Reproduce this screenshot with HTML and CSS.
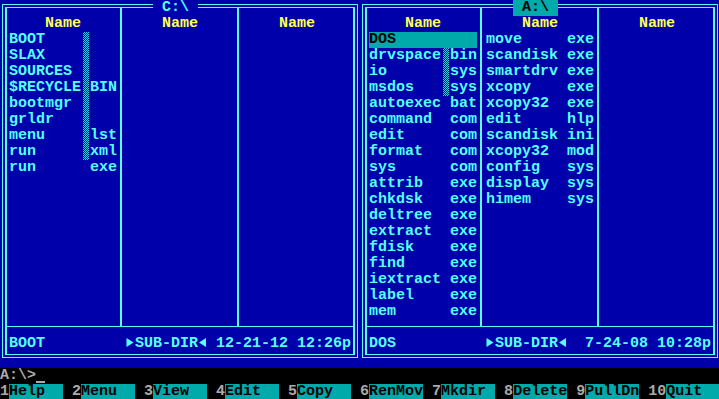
FILE: index.html
```html
<!DOCTYPE html>
<html>
    <head>
        <link rel="stylesheet" href="styles.css">
    </head>
    <body>
        <div class="screen">
            <div class="panels">
                <section class="panel">
                    <div class="title">C:\</div>
                    <div class="frame">
                        <div class="inner">
                            <div class="cols">
                                <div class="col">
                                    <div class="head">Name</div>
                                    <div class="f sh"><span class="n">BOOT</span><i></i><span class="e"></span></div>
                                    <div class="f sh"><span class="n">SLAX</span><i></i><span class="e"></span></div>
                                    <div class="f sh"><span class="n">SOURCES</span><i></i><span class="e"></span></div>
                                    <div class="f sh"><span class="n">$RECYCLE</span><i></i><span class="e">BIN</span></div>
                                    <div class="f sh"><span class="n">bootmgr</span><i></i><span class="e"></span></div>
                                    <div class="f sh"><span class="n">grldr</span><i></i><span class="e"></span></div>
                                    <div class="f sh"><span class="n">menu</span><i></i><span class="e">lst</span></div>
                                    <div class="f sh"><span class="n">run</span><i></i><span class="e">xml</span></div>
                                    <div class="f"><span class="n">run</span><i></i><span class="e">exe</span></div>
                                </div>
                                <div class="col">
                                    <div class="head">Name</div>
                                </div>
                                <div class="col">
                                    <div class="head">Name</div>
                                </div>
                            </div>
                            <div class="status">
                                <span class="s-name">BOOT</span>
                                <span class="tri"><svg width="9" height="16" viewBox="0 0 9 16"><path d="M0.5 2 L7.5 6.5 L0.5 11 Z" fill="#55ffff"/></svg></span>
                                <span>SUB-DIR</span>
                                <span class="tri"><svg width="9" height="16" viewBox="0 0 9 16"><path d="M8 2 L1 6.5 L8 11 Z" fill="#55ffff"/></svg></span>
                                <span> 12-21-12 12:26p</span>
                            </div>
                        </div>
                    </div>
                </section>
                <section class="panel">
                    <div class="title active">A:\</div>
                    <div class="frame">
                        <div class="inner">
                            <div class="cols">
                                <div class="col">
                                    <div class="head">Name</div>
                                    <div class="f sel"><span class="n">DOS</span><i></i><span class="e"></span></div>
                                    <div class="f sh"><span class="n">drvspace</span><i></i><span class="e">bin</span></div>
                                    <div class="f sh"><span class="n">io</span><i></i><span class="e">sys</span></div>
                                    <div class="f sh"><span class="n">msdos</span><i></i><span class="e">sys</span></div>
                                    <div class="f"><span class="n">autoexec</span><i></i><span class="e">bat</span></div>
                                    <div class="f"><span class="n">command</span><i></i><span class="e">com</span></div>
                                    <div class="f"><span class="n">edit</span><i></i><span class="e">com</span></div>
                                    <div class="f"><span class="n">format</span><i></i><span class="e">com</span></div>
                                    <div class="f"><span class="n">sys</span><i></i><span class="e">com</span></div>
                                    <div class="f"><span class="n">attrib</span><i></i><span class="e">exe</span></div>
                                    <div class="f"><span class="n">chkdsk</span><i></i><span class="e">exe</span></div>
                                    <div class="f"><span class="n">deltree</span><i></i><span class="e">exe</span></div>
                                    <div class="f"><span class="n">extract</span><i></i><span class="e">exe</span></div>
                                    <div class="f"><span class="n">fdisk</span><i></i><span class="e">exe</span></div>
                                    <div class="f"><span class="n">find</span><i></i><span class="e">exe</span></div>
                                    <div class="f"><span class="n">iextract</span><i></i><span class="e">exe</span></div>
                                    <div class="f"><span class="n">label</span><i></i><span class="e">exe</span></div>
                                    <div class="f"><span class="n">mem</span><i></i><span class="e">exe</span></div>
                                </div>
                                <div class="col">
                                    <div class="head">Name</div>
                                    <div class="f"><span class="n">move</span><i></i><span class="e">exe</span></div>
                                    <div class="f"><span class="n">scandisk</span><i></i><span class="e">exe</span></div>
                                    <div class="f"><span class="n">smartdrv</span><i></i><span class="e">exe</span></div>
                                    <div class="f"><span class="n">xcopy</span><i></i><span class="e">exe</span></div>
                                    <div class="f"><span class="n">xcopy32</span><i></i><span class="e">exe</span></div>
                                    <div class="f"><span class="n">edit</span><i></i><span class="e">hlp</span></div>
                                    <div class="f"><span class="n">scandisk</span><i></i><span class="e">ini</span></div>
                                    <div class="f"><span class="n">xcopy32</span><i></i><span class="e">mod</span></div>
                                    <div class="f"><span class="n">config</span><i></i><span class="e">sys</span></div>
                                    <div class="f"><span class="n">display</span><i></i><span class="e">sys</span></div>
                                    <div class="f"><span class="n">himem</span><i></i><span class="e">sys</span></div>
                                </div>
                                <div class="col">
                                    <div class="head">Name</div>
                                </div>
                            </div>
                            <div class="status">
                                <span class="s-name">DOS</span>
                                <span class="tri"><svg width="9" height="16" viewBox="0 0 9 16"><path d="M0.5 2 L7.5 6.5 L0.5 11 Z" fill="#55ffff"/></svg></span>
                                <span>SUB-DIR</span>
                                <span class="tri"><svg width="9" height="16" viewBox="0 0 9 16"><path d="M8 2 L1 6.5 L8 11 Z" fill="#55ffff"/></svg></span>
                                <span>  7-24-08 10:28p</span>
                            </div>
                        </div>
                    </div>
                </section>
            </div>
            <div class="prompt"><span>A:\&gt;</span><span class="cursor"></span></div>
            <div class="keys">
                <div class="fk"><span class="num">1</span><span class="lbl">Help</span></div>
                <div class="fk"><span class="num">2</span><span class="lbl">Menu</span></div>
                <div class="fk"><span class="num">3</span><span class="lbl">View</span></div>
                <div class="fk"><span class="num">4</span><span class="lbl">Edit</span></div>
                <div class="fk"><span class="num">5</span><span class="lbl">Copy</span></div>
                <div class="fk"><span class="num">6</span><span class="lbl">RenMov</span></div>
                <div class="fk"><span class="num">7</span><span class="lbl">Mkdir</span></div>
                <div class="fk"><span class="num">8</span><span class="lbl">Delete</span></div>
                <div class="fk"><span class="num">9</span><span class="lbl">PullDn</span></div>
                <div class="fk"><span class="num">10</span><span class="lbl">Quit</span></div>
            </div>
        </div>
    </body>
</html>
```

FILE: styles.css
```css
body{
    margin: 0;
    background: #000;
}
.screen{
    width: 719px;
    height: 399px;
    overflow: hidden;
    background: #000;
    font-family: 'Liberation Mono', 'DejaVu Sans Mono', monospace;
    font-size: 15px;
    font-weight: bold;
    line-height: 16px;
    color: #55ffff;
}
.screen span, .title, .head{
    white-space: pre;
}
.panels{
    display: flex;
    width: 720px;
    height: 368px;
    background: #0000aa;
}
.panel{
    position: relative;
    width: 360px;
    height: 368px;
    box-sizing: border-box;
    padding: 4px 2px 10px 2px;
}
.title{
    position: absolute;
    left: 153px;
    top: 0;
    width: 45px;
    height: 16px;
    text-align: center;
    background: #0000aa;
    color: #55ffff;
}
.title.active{
    background: #00aaaa;
    color: #000;
}
.frame{
    height: 100%;
    box-sizing: border-box;
    border: 1px solid #55ffff;
    padding: 2px;
}
.inner{
    height: 100%;
    box-sizing: border-box;
    border-style: solid;
    border-color: #55ffff;
    border-width: 1px 2px;
}
.cols{
    display: flex;
    height: 318px;
    padding: 0 2px;
}
.col{
    width: 108px;
    padding-top: 8px;
}
.col + .col{
    margin-left: 3px;
    padding-left: 4px;
    border-left: 2px solid #55ffff;
}
.head{
    height: 16px;
    text-align: center;
    color: #ffff55;
}
.f{
    display: flex;
    height: 16px;
}
.f .n{
    width: 72px;
}
.f i{
    width: 9px;
}
.f .e{
    width: 27px;
}
.f.sh i{
    box-sizing: border-box;
    border-left: 2px solid transparent;
    border-right: 1px solid transparent;
    background: conic-gradient(#55ffff 25%, transparent 0 50%, #55ffff 0 75%, transparent 0) 0 0 / 2px 2px;
    background-clip: content-box;
    opacity: 0.8;
}
.f.sel{
    background: #00aaaa;
    color: #000;
}
.status{
    display: flex;
    border-top: 1px solid #55ffff;
    padding: 9px 2px 2px;
    height: 16px;
}
.s-name{
    width: 117px;
}
.tri{
    width: 9px;
    height: 16px;
}
.tri svg{
    display: block;
}
.prompt{
    height: 16px;
    color: #aaaaaa;
    display: flex;
}
.cursor{
    width: 9px;
    height: 2px;
    margin-top: 13px;
    background: #aaaaaa;
}
.keys{
    display: flex;
    width: 720px;
    height: 16px;
}
.fk{
    display: flex;
    margin-right: 9px;
}
.fk:last-child{
    margin-right: 0;
}
.num{
    color: #aaaaaa;
}
.lbl{
    width: 54px;
    background: #00aaaa;
    color: #000;
}
```
